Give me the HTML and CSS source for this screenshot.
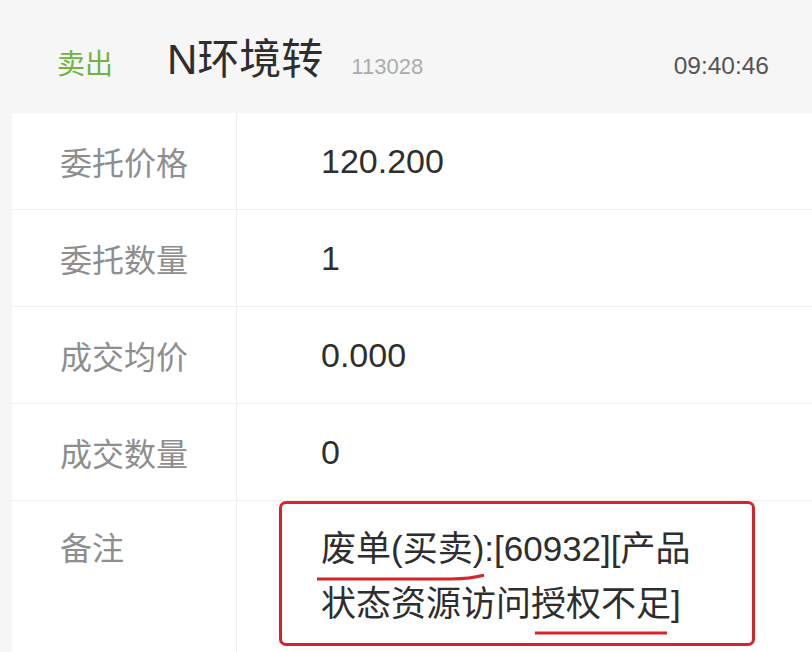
FILE: index.html
```html
<!DOCTYPE html>
<html lang="zh-CN">
<head>
<meta charset="utf-8">
<title>委托详情</title>
<link rel="stylesheet" href="styles.css">
</head>
<body>
<div class="page">
  <header class="head">
    <span class="side">卖出</span>
    <span class="name">N环境转</span>
    <span class="code">113028</span>
    <span class="time">09:40:46</span>
  </header>
  <section class="table">
    <div class="row">
      <div class="label">委托价格</div>
      <div class="value">120.200</div>
    </div>
    <div class="row">
      <div class="label">委托数量</div>
      <div class="value">1</div>
    </div>
    <div class="row">
      <div class="label">成交均价</div>
      <div class="value">0.000</div>
    </div>
    <div class="row">
      <div class="label">成交数量</div>
      <div class="value">0</div>
    </div>
    <div class="row row-note">
      <div class="label">备注</div>
      <div class="value note-cell">
        <div class="note-box"><span class="u u1">废单(买卖)<svg class="stroke" viewBox="0 0 160 8" preserveAspectRatio="none"><path d="M0 5 L128 5 Q148 4.5 160 1" fill="none" stroke="#d8232a" stroke-width="3" stroke-linecap="round" vector-effect="non-scaling-stroke"/></svg></span>:[60932][产品<br>状态资源访问<span class="u u2">授权不足<svg class="stroke" viewBox="0 0 160 8" preserveAspectRatio="none"><path d="M0 4 L160 4" fill="none" stroke="#d8232a" stroke-width="3" stroke-linecap="round" vector-effect="non-scaling-stroke"/></svg></span>]</div>
      </div>
    </div>
  </section>
</div>
</body>
</html>
```

FILE: styles.css
```css
html, body {
  margin: 0;
  padding: 0;
}
body {
  background: #f6f6f6;
  font-family: "Liberation Sans", "Noto Sans CJK SC", sans-serif;
  width: 812px;
  height: 652px;
  overflow: hidden;
}
.page {
  display: flex;
  flex-direction: column;
}
.head {
  height: 113px;
  display: flex;
  align-items: baseline;
  padding: 40px 43px 0 57px;
  box-sizing: border-box;
}
.side {
  color: #6fb343;
  font-size: 28px;
  line-height: 40px;
}
.name {
  color: #2e2e2e;
  font-size: 42px;
  line-height: 40px;
  margin-left: 54px;
}
.code {
  color: #acacac;
  font-size: 22px;
  margin-left: 28px;
}
.time {
  color: #555;
  font-size: 24.5px;
  margin-left: auto;
}
.table {
  margin-left: 12px;
  background: #fff;
  display: flex;
  flex-direction: column;
}
.row {
  display: grid;
  grid-template-columns: 225px 1fr;
  height: 96px;
  border-bottom: 1px solid #efefef;
}
.label {
  border-right: 1px solid #efefef;
  padding-left: 48px;
  color: #8e8e8e;
  font-size: 32px;
  display: flex;
  align-items: center;
}
.value {
  padding-left: 84px;
  color: #2e2e2e;
  font-size: 34px;
  display: flex;
  align-items: center;
}
.row-note {
  height: 160px;
  border-bottom: none;
}
.row-note .label {
  align-items: flex-start;
  padding-top: 21px;
  line-height: 55px;
}
.note-cell {
  padding-left: 42px;
  align-items: flex-start;
}
.note-box {
  width: 476px;
  box-sizing: border-box;
  height: 145px;
  border: 3px solid #d8232a;
  border-radius: 7px;
  padding: 17px 0 0 39px;
  line-height: 55px;
  font-size: 35px;
  color: #2e2e2e;
}
.u {
  position: relative;
}
.stroke {
  position: absolute;
  top: 100%;
  height: 8px;
  margin-top: 6px;
}
.u1 .stroke {
  left: -4px;
  width: calc(100% + 4px);
}
.u2 .stroke {
  left: 4px;
  width: calc(100% - 8px);
}
```
